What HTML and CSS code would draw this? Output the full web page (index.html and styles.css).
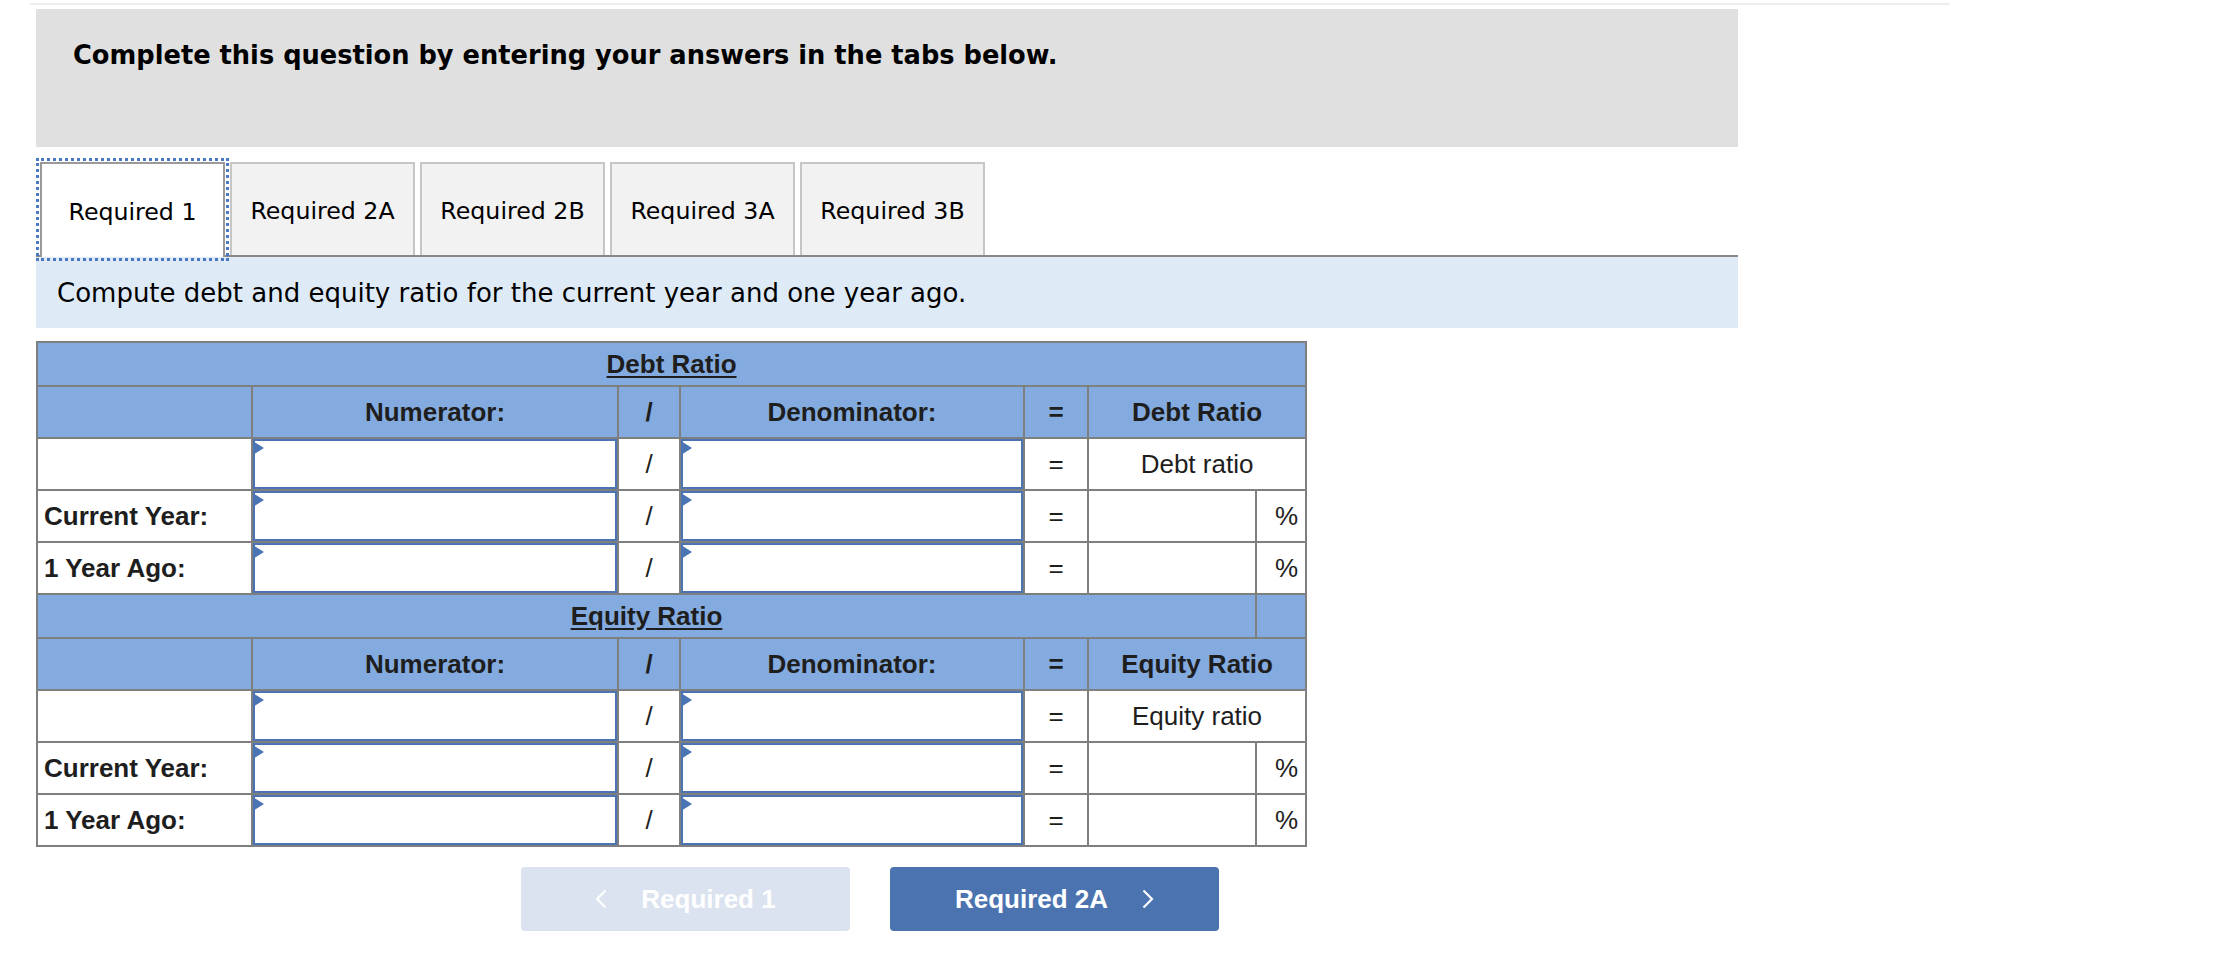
FILE: index.html
```html
<!DOCTYPE html>
<html lang="en">
<head>
<meta charset="utf-8">
<title>Debt and equity ratio</title>
<link rel="stylesheet" href="styles.css">
</head>
<body>
<div class="wrap">
  <div class="topline"></div>
  <div class="main">
    <div class="intro">
      <h2 class="intro-text">Complete this question by entering your answers in the tabs below.</h2>
    </div>

    <div class="tabs">
      <div class="tab active">Required 1</div>
      <div class="tab">Required 2A</div>
      <div class="tab">Required 2B</div>
      <div class="tab">Required 3A</div>
      <div class="tab">Required 3B</div>
    </div>

    <div class="instr">Compute debt and equity ratio for the current year and one year ago.</div>

    <table class="ratio">
      <colgroup>
        <col class="c-label"><col class="c-num"><col class="c-op"><col class="c-den"><col class="c-eq"><col class="c-res"><col class="c-pct">
      </colgroup>
      <tr class="title"><th colspan="7"><span class="u">Debt Ratio</span></th></tr>
      <tr class="head"><th></th><th>Numerator:</th><th>/</th><th>Denominator:</th><th>=</th><th colspan="2">Debt Ratio</th></tr>
      <tr class="row"><td class="lbl"></td><td class="in"><div class="inp"></div></td><td class="op">/</td><td class="in"><div class="inp"></div></td><td class="op">=</td><td class="res" colspan="2">Debt ratio</td></tr>
      <tr class="row"><td class="lbl">Current Year:</td><td class="in"><div class="inp"></div></td><td class="op">/</td><td class="in"><div class="inp"></div></td><td class="op">=</td><td class="res"></td><td class="pct">%</td></tr>
      <tr class="row"><td class="lbl">1 Year Ago:</td><td class="in"><div class="inp"></div></td><td class="op">/</td><td class="in"><div class="inp"></div></td><td class="op">=</td><td class="res"></td><td class="pct">%</td></tr>

      <tr class="title"><th colspan="6"><span class="u">Equity Ratio</span></th><th></th></tr>
      <tr class="head"><th></th><th>Numerator:</th><th>/</th><th>Denominator:</th><th>=</th><th colspan="2">Equity Ratio</th></tr>
      <tr class="row"><td class="lbl"></td><td class="in"><div class="inp"></div></td><td class="op">/</td><td class="in"><div class="inp"></div></td><td class="op">=</td><td class="res" colspan="2">Equity ratio</td></tr>
      <tr class="row"><td class="lbl">Current Year:</td><td class="in"><div class="inp"></div></td><td class="op">/</td><td class="in"><div class="inp"></div></td><td class="op">=</td><td class="res"></td><td class="pct">%</td></tr>
      <tr class="row"><td class="lbl">1 Year Ago:</td><td class="in"><div class="inp"></div></td><td class="op">/</td><td class="in"><div class="inp"></div></td><td class="op">=</td><td class="res"></td><td class="pct">%</td></tr>
    </table>

    <div class="nav">
      <button class="btn prev" type="button">
        <svg class="chev" width="12" height="20" viewBox="0 0 12 20"><polyline points="10.5,1.5 2,10 10.5,18.5" fill="none" stroke="#ffffff" stroke-width="2.2"/></svg>
        <span>Required 1</span>
      </button>
      <button class="btn next" type="button">
        <span>Required 2A</span>
        <svg class="chev" width="12" height="20" viewBox="0 0 12 20"><polyline points="1.5,1.5 10,10 1.5,18.5" fill="none" stroke="#ffffff" stroke-width="2.2"/></svg>
      </button>
    </div>
  </div>
</div>
</body>
</html>
```
FILE: styles.css
```css
html, body {
  margin: 0;
  padding: 0;
  background: #ffffff;
}

.wrap {
  padding: 3px 0 0 30px;
}

.topline {
  width: 1920px;
  height: 2px;
  background: #eeeeee;
}

.main {
  margin: 4px 0 0 6px;
  width: 1702px;
}

.intro {
  height: 138px;
  box-sizing: border-box;
  background: #e0e0e0;
  padding: 31px 0 0 37px;
}

.intro-text {
  margin: 0;
  font-family: "DejaVu Sans", Verdana, sans-serif;
  font-weight: bold;
  font-size: 25.7px;
  line-height: 30px;
  color: #000000;
}

.tabs {
  display: flex;
  gap: 5px;
  margin-top: 15px;
  padding-left: 4px;
  border-bottom: 2px solid #888888;
  height: 93px;
}

.tab {
  width: 185px;
  height: 93px;
  box-sizing: border-box;
  border: 2px solid #c6c6c6;
  border-bottom: none;
  background: #f2f2f2;
  display: flex;
  align-items: center;
  justify-content: center;
  padding-top: 3px;
  font-family: "DejaVu Sans", Verdana, sans-serif;
  font-size: 23.7px;
  color: #000000;
}

.tab.active {
  height: 95px;
  margin-bottom: -2px;
  background: #ffffff;
  border-color: #9a9a9a;
  outline: 3px dotted #4a78c2;
  outline-offset: 1px;
  position: relative;
  z-index: 1;
}

.instr {
  height: 71px;
  background: #deebf7;
  display: flex;
  align-items: center;
  padding-left: 21px;
  font-family: "DejaVu Sans", Verdana, sans-serif;
  font-size: 26px;
  color: #000000;
}

.ratio {
  margin-top: 13px;
  border-collapse: collapse;
  table-layout: fixed;
  width: 1269px;
  font-family: "Liberation Sans", Arial, sans-serif;
  font-size: 26px;
  color: #1e1e1e;
}

.c-label { width: 215px; }
.c-num { width: 366px; }
.c-op { width: 62px; }
.c-den { width: 344px; }
.c-eq { width: 64px; }
.c-res { width: 168px; }
.c-pct { width: 50px; }

.ratio th,
.ratio td {
  border: 2px solid #7f7f7f;
  padding: 0;
  text-align: center;
  vertical-align: middle;
}

.ratio th {
  background: #84abdf;
  font-weight: bold;
}

.title { height: 44px; }
.head { height: 52px; }
.row { height: 52px; }

.u {
  text-decoration: underline;
  text-underline-offset: 3px;
}

.ratio td.lbl {
  text-align: left;
  padding: 0 6px;
  font-weight: bold;
}

.ratio td.pct {
  text-align: right;
  padding-right: 7px;
}

.ratio td.in {
  padding: 0;
}

.inp {
  position: relative;
  height: 50px;
  box-sizing: border-box;
  border: 2px solid #4a74b4;
  background: #ffffff;
}

.inp::before {
  content: "";
  position: absolute;
  left: -2px;
  top: 0;
  width: 0;
  height: 0;
  border-left: 11px solid #4a74b4;
  border-top: 7px solid transparent;
  border-bottom: 7px solid transparent;
}

.nav {
  display: flex;
  gap: 40px;
  margin-top: 20px;
  padding-left: 485px;
}

.btn {
  width: 329px;
  height: 64px;
  border: none;
  border-radius: 4px;
  display: flex;
  align-items: center;
  justify-content: center;
  gap: 34px;
  font-family: "Liberation Sans", Arial, sans-serif;
  font-weight: bold;
  font-size: 26px;
  color: #ffffff;
  padding: 0;
}

.btn.prev {
  background: #dae3ef;
}

.btn.next {
  background: #4a73b0;
}

.chev {
  display: block;
  flex: none;
}
```
